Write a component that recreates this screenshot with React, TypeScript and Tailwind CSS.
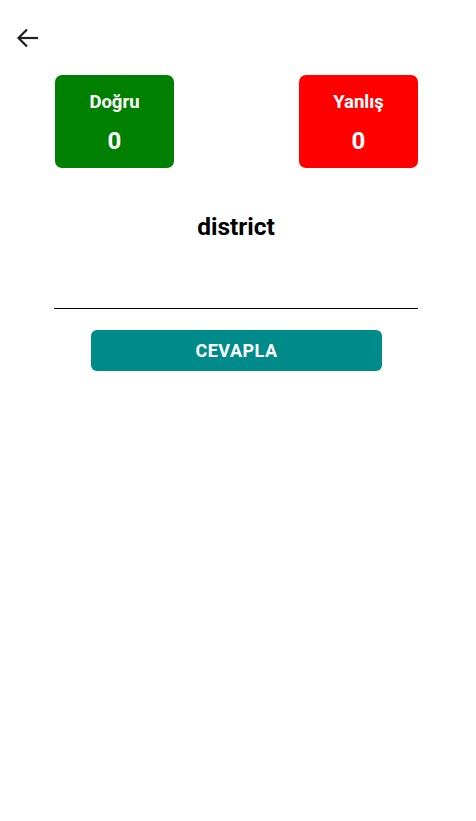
import React, { useState } from 'react'

const ScoreBox: React.FC<{ label: string; value: number; color: string }> = ({ label, value, color }) => (
  <div className={`${color} w-[119px] h-[93px] rounded-[7px] flex flex-col items-center text-white font-bold`}>
    <span className="mt-[14px] text-[18.5px] leading-[26px]">{label}</span>
    <span className="mt-[12px] text-[24px] leading-[28px]">{value}</span>
  </div>
)

export default function App() {
  const [answer, setAnswer] = useState('')
  const [correct] = useState(0)
  const [wrong] = useState(0)

  return (
    <div className="w-[476px] h-[821px] bg-white font-['Roboto',sans-serif] text-black">
      <div className="pt-[26px] pl-[16px] h-[75px]">
        <button className="w-[24px] h-[24px] flex items-center justify-center">
          <svg width="24" height="24" viewBox="0 0 24 24" fill="none" stroke="#1f1f1f" strokeWidth="2.2">
            <path d="M22 12H3" />
            <path d="M11 3.5 2.5 12l8.5 8.5" />
          </svg>
        </button>
      </div>

      <div className="ml-[54px] w-[364px] flex flex-col">
        <div className="flex justify-between pl-[1px]">
          <ScoreBox label="Doğru" value={correct} color="bg-[#008000]" />
          <ScoreBox label="Yanlış" value={wrong} color="bg-[#ff0000]" />
        </div>

        <h2 className="mt-[43px] text-center text-[24.5px] leading-[32px] font-bold">district</h2>

        <input
          value={answer}
          onChange={(e) => setAnswer(e.target.value)}
          className="mt-[27px] h-[39px] border-b border-black outline-none text-[18px] w-full"
        />

        <button className="mt-[21px] ml-[37px] w-[291px] h-[41px] rounded-[6px] bg-[#008b8b] text-white font-bold text-[18px] tracking-[0.5px]">
          CEVAPLA
        </button>
      </div>
    </div>
  )
}
